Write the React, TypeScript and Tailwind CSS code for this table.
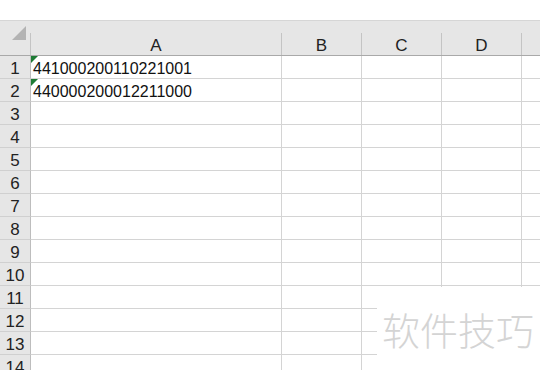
import React from "react";

const cols = [
  { key: "A", w: "w-[251px]" },
  { key: "B", w: "w-[80px]" },
  { key: "C", w: "w-[80px]" },
  { key: "D", w: "w-[80px]" },
];

const data: Record<number, string> = {
  1: "441000200110221001",
  2: "440000200012211000",
};

const rows = Array.from({ length: 14 }, (_, i) => i + 1);

function GreenTri() {
  return (
    <svg className="absolute left-0 top-0" width="7" height="7" viewBox="0 0 7 7">
      <polygon points="0,0 7,0 0,7" fill="#1d7b34" />
    </svg>
  );
}

export default function App() {
  return (
    <div
      className="relative w-[540px] h-[370px] overflow-hidden bg-white text-black"
      style={{ fontFamily: '"Liberation Sans", Arial, sans-serif' }}
    >
      <div className="h-[21px] border-b border-[#d6d6d6] bg-white" />
      <div className="h-[12px] bg-[#e6e6e6]" />
      {/* header row */}
      <div className="flex h-[23px] bg-[#e6e6e6] border-b border-[#a9a9a9]">
        <div className="relative w-[31px] shrink-0 border-r border-[#c4c4c4]">
          <svg className="absolute left-[12px] top-[-12px]" width="15" height="20" viewBox="0 0 15 20">
            <polygon points="0,19 14,19 14,5" fill="#b3b3b3" />
          </svg>
        </div>
        {cols.map((c) => (
          <div
            key={c.key}
            className={`${c.w} shrink-0 border-r border-[#c4c4c4] flex items-center justify-center pt-[4px] text-[17px] leading-[20px] text-[#222]`}
          >
            {c.key}
          </div>
        ))}
        <div className="flex-1" />
      </div>
      {rows.map((r) => (
        <div key={r} className="flex h-[23px]">
          <div className="w-[31px] shrink-0 bg-[#e6e6e6] border-r border-[#bdbdbd] border-b border-b-[#d0d0d0] flex items-center justify-center pt-[4px] text-[17px] leading-[20px] text-[#222]">
            {r}
          </div>
          {cols.map((c, ci) => (
            <div
              key={c.key}
              className={`${c.w} relative shrink-0 border-r border-b border-[#d4d4d4] flex items-center pl-[2px] pt-[3px] text-[16px] leading-[20px] text-[#111]`}
            >
              {ci === 0 && data[r] ? (
                <>
                  <GreenTri />
                  <span>{data[r]}</span>
                </>
              ) : null}
            </div>
          ))}
          <div className="flex-1 border-b border-[#d4d4d4]" />
        </div>
      ))}
      {/* watermark */}
      <div className="absolute left-[377px] top-[287px] right-0 bottom-0 bg-white">
        <div
          className="absolute left-[5px] top-[20px] text-[38px] leading-[44px] font-light text-[#d4d4d4]"
          style={{ fontFamily: '"Noto Sans CJK SC", sans-serif' }}
        >
          软件技巧
        </div>
      </div>
    </div>
  );
}
